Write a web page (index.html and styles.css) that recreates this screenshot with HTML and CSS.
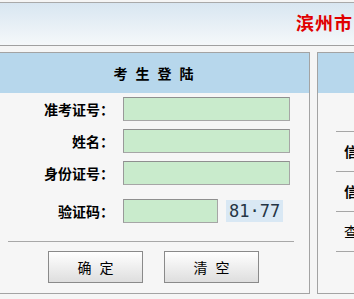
FILE: index.html
```html
<!DOCTYPE html>
<html lang="zh-CN">
<head>
    <meta charset="UTF-8">
    <meta name="viewport" content="width=device-width, initial-scale=1.0">
    <title>考生登陆</title>
    <link rel="stylesheet" href="styles.css">
</head>
<body>
    <div class="header">
        <div class="site-title">滨州市</div>
    </div>

    <div class="main">
        <div class="panel login-panel">
            <div class="panel-title">考生登陆</div>
            <form class="login-form" onsubmit="return false">
                <label class="label" for="zkzh">准考证号：</label>
                <input class="field" id="zkzh" type="text">

                <label class="label" for="xm">姓名：</label>
                <input class="field" id="xm" type="text">

                <label class="label" for="sfzh">身份证号：</label>
                <input class="field" id="sfzh" type="text">

                <label class="label code-row" for="yzm">验证码：</label>
                <div class="code-row code-wrap">
                    <input class="field code-field" id="yzm" type="text">
                    <span class="captcha">81·77</span>
                </div>
            </form>
            <div class="separator"></div>
            <div class="buttons">
                <button class="btn" type="button">确定</button>
                <button class="btn" type="reset">清空</button>
            </div>
        </div>

        <div class="panel side-panel">
            <div class="panel-title"></div>
            <ul class="links">
                <li class="strong">信息核对</li>
                <li class="strong">信息修改</li>
                <li>查询成绩</li>
            </ul>
        </div>
    </div>
</body>
</html>
```

FILE: styles.css
```css
body {
    margin: 0;
    background-color: #f5f5f5;
    font-family: "Noto Sans CJK SC", "Liberation Sans", sans-serif;
    font-size: 14px;
    color: #000;
    overflow: hidden;
}

.header {
    margin-top: 2px;
    height: 42px;
    border-top: 1px solid #a9a9a9;
    border-bottom: 1px solid #a0a0a0;
    background: linear-gradient(#d8e6f1, #f5f8fa);
    display: flex;
    justify-content: flex-start;
    padding-left: 296px;
    white-space: nowrap;
}

.site-title {
    color: #e00000;
    font-size: 18px;
    font-weight: bold;
    letter-spacing: 1px;
    line-height: 38px;
}

.main {
    display: flex;
    gap: 7px;
    margin-top: 6px;
    margin-left: -1px;
    width: 600px;
}

.panel {
    border: 1px solid #a3a3a3;
    background-color: #f6f6f6;
    height: 240px;
}

.login-panel {
    width: 309px;
    flex-shrink: 0;
}

.side-panel {
    width: 240px;
    flex-shrink: 0;
}

.panel-title {
    height: 40px;
    background-color: #b7d7ec;
    text-align: center;
    line-height: 40px;
    font-weight: bold;
    letter-spacing: 8px;
    padding-left: 6px;
}

.login-form {
    display: grid;
    grid-template-columns: 114px 167px;
    column-gap: 9px;
    row-gap: 8px;
    align-items: center;
    padding-top: 4px;
    margin: 0;
}

.label {
    text-align: right;
    font-weight: bold;
}

.field {
    box-sizing: border-box;
    height: 24px;
    margin: 0;
    padding: 0 4px;
    background-color: #c9ebcc;
    border: 1px solid #a6a6a6;
    border-top-color: #8f8f8f;
    border-left-color: #999;
}

.code-row {
    margin-top: 6px;
}

.code-wrap {
    display: flex;
    align-items: center;
    gap: 8px;
}

.code-field {
    width: 95px;
}

.captcha {
    background-color: #d9e8f4;
    color: #253545;
    font-family: "DejaVu Sans Mono", monospace;
    font-size: 17px;
    letter-spacing: 0;
    line-height: 22px;
    padding: 0 3px;
}

.separator {
    margin: 18px 15px 0 8px;
    border-top: 1px solid #a8a8a8;
}

.buttons {
    display: flex;
    gap: 21px;
    padding-left: 48px;
    margin-top: 9px;
}

.btn {
    width: 95px;
    height: 32px;
    border: 1px solid #8a8a8a;
    background: linear-gradient(#ffffff, #dedede);
    font-family: "Noto Sans CJK SC", sans-serif;
    font-size: 14px;
    letter-spacing: 8px;
    padding: 0 0 0 8px;
    cursor: pointer;
}

.links {
    list-style: none;
    margin: 38px 0 0 18px;
    padding: 0;
}

.links li {
    border-top: 1px solid #a6a6a6;
    height: 39px;
    line-height: 39px;
    padding-left: 8px;
    white-space: nowrap;
}

.links li:last-child {
    border-bottom: 1px solid #a6a6a6;
}

.links li.strong {
    font-weight: bold;
}
```
